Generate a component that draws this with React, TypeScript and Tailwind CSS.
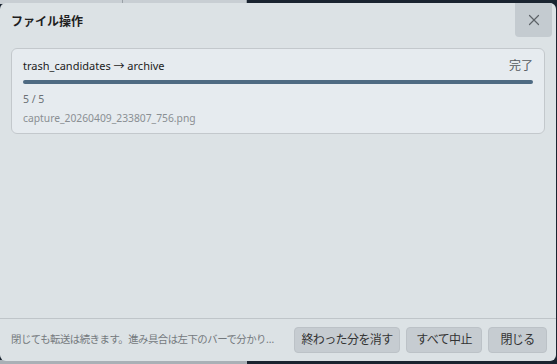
import React from 'react';
import { X } from 'lucide-react';

const font = { fontFamily: '"Noto Sans", "Noto Sans CJK JP", sans-serif' };

export default function App() {
  return (
    <div className="relative w-[557px] h-[364px] overflow-hidden bg-[#1a2430]" style={font}>
      {/* Background app (mostly hidden) */}
      <div className="flex h-[4px]">
        <div className="w-[123px] bg-[#c8ced3] border-r border-[#9aa1a7]" />
        <div className="w-[124px] bg-[#c8ced3] border-r border-[#9aa1a7]" />
        <div className="flex-1 bg-[#1a2430]" />
      </div>
      <div className="absolute left-0 bottom-0 w-[247px] h-[4px] bg-[#a9b0b6]" />

      {/* Dialog */}
      <div className="absolute left-0 top-[3px] w-[556px] h-[358px] flex flex-col bg-[#dce2e5] rounded-[6px] overflow-hidden">
        <div className="flex items-start justify-between h-[44px]">
          <h2 className="pl-[11px] pt-[10px] text-[12px] font-semibold text-[#1e1e1e]">ファイル操作</h2>
          <button className="w-[37px] h-[34px] mr-[4px] flex items-center justify-center bg-[#c4cbd0] rounded-bl-[4px] rounded-br-[4px] text-[#5d6368]">
            <X className="w-[18px] h-[18px]" strokeWidth={1.6} />
          </button>
        </div>

        <div className="flex-1 px-[11px] pt-[1px]">
          <div className="h-[86px] bg-[#e6ebef] border border-[#c3c8cc] rounded-[6px] px-[11px] pt-[8px]">
            <div className="flex items-center justify-between">
              <span className="text-[11px] text-[#1c1c1c]">trash_candidates → archive</span>
              <span className="text-[12px] text-[#555a5e]">完了</span>
            </div>
            <div className="mt-[5px] h-[4px] rounded-full bg-[#4e6a82]" />
            <div className="mt-[8px] text-[10.5px] text-[#6b7075]">5 / 5</div>
            <div className="mt-[3px] text-[10.3px] text-[#8a8f93]">capture_20260409_233807_756.png</div>
          </div>
        </div>

        <div className="h-[43px] border-t border-[#bfc5c9] flex items-center pl-[11px] pr-[9px] gap-[6px]">
          <span className="flex-1 min-w-0 truncate text-[10.4px] tracking-[-0.5px] text-[#74797d] pr-[12px]">
            閉じても転送は続きます。進み具合は左下のバーで分かります。
          </span>
          <button className="w-[106px] h-[26px] shrink-0 rounded-[4px] bg-[#c6ccd1] border border-[#bcc2c7] text-[12px] tracking-[-0.6px] text-[#333]">終わった分を消す</button>
          <button className="w-[76px] h-[26px] shrink-0 rounded-[4px] bg-[#c6ccd1] border border-[#bcc2c7] text-[12px] tracking-[-0.6px] text-[#333]">すべて中止</button>
          <button className="w-[59px] h-[26px] shrink-0 rounded-[4px] bg-[#c6ccd1] border border-[#bcc2c7] text-[12px] tracking-[-0.6px] text-[#333]">閉じる</button>
        </div>
      </div>
    </div>
  );
}
